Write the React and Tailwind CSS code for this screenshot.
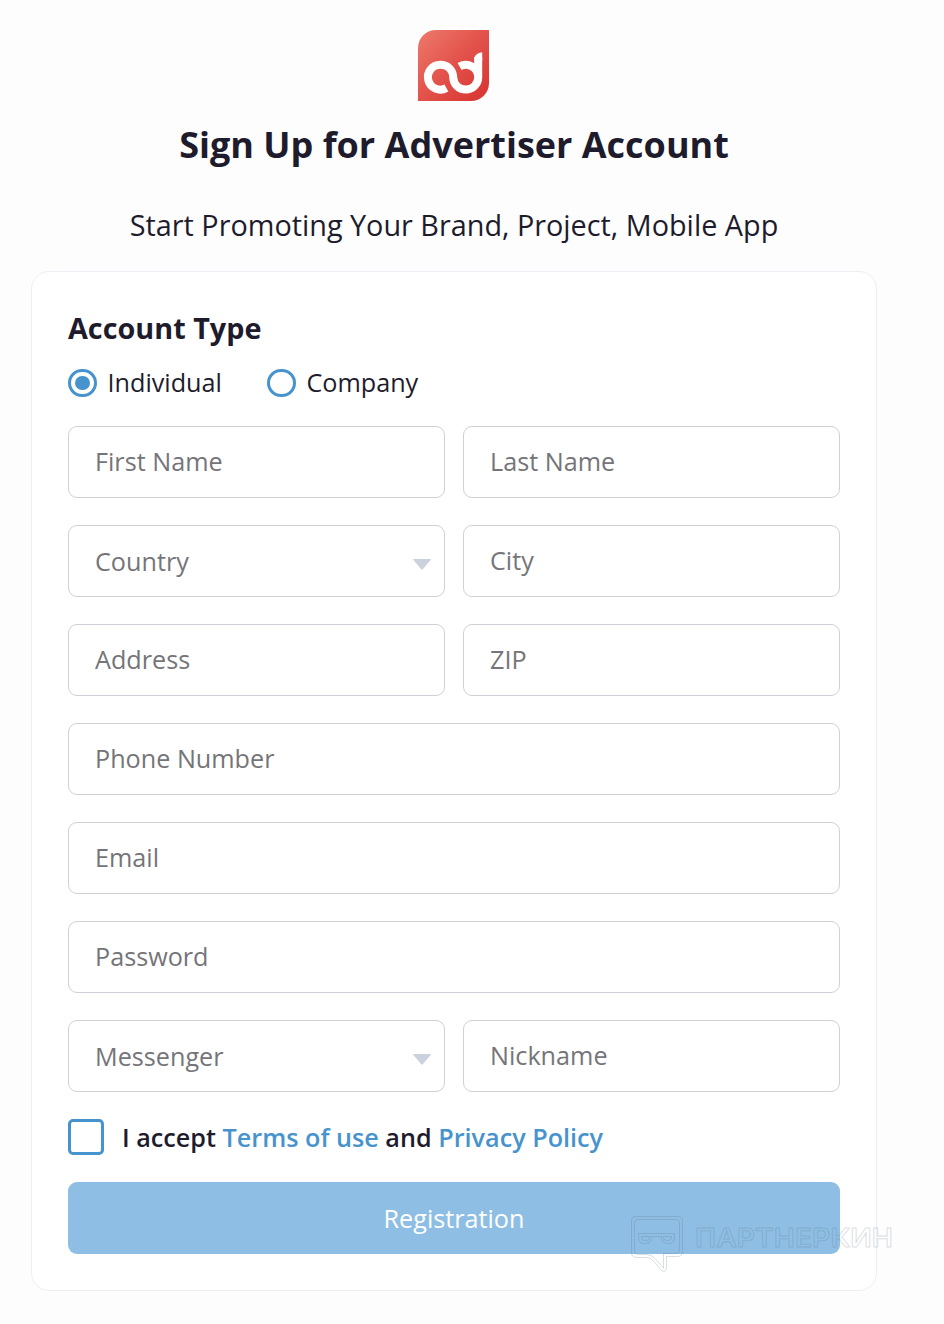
import React from 'react';

const Logo = () => (
  <svg width="71" height="71" viewBox="0 0 71 71" fill="none" className="mr-[2px]">
    <defs>
      <linearGradient id="logoBg" x1="0" y1="0" x2="71" y2="71" gradientUnits="userSpaceOnUse">
        <stop offset="0" stopColor="#ee7a6c" />
        <stop offset="0.5" stopColor="#e2524b" />
        <stop offset="1" stopColor="#d8322f" />
      </linearGradient>
    </defs>
    <path d="M18 0H70.5Q71 0 71 0.5V53A18 18 0 0 1 53 71H0.5Q0 71 0 70.5V18A18 18 0 0 1 18 0Z" fill="url(#logoBg)" />
    <g stroke="#fff" strokeWidth="8">
      <path d="M28.4 58A12.4 12.4 0 1 1 22.4 34.800C29.800 34.800 34.800 40 35.200 47.200C35.600 54.400 40.800 59.600 47.800 59.600A12.400 12.400 0 0 0 60.200 47.200V27" />
      <path d="M41.6 36.500A12.400 12.400 0 0 1 60.200 47.200" />
    </g>
    <path d="M56.2 29Q56.700 23.200 64.200 22.300V31H56.200Z" fill="#fff" />
  </svg>
);

const Radio = ({ label, checked }) => (
  <label className="flex items-center gap-[10.5px]">
    <span className="mt-px flex h-[28px] w-[29px] items-center justify-center rounded-full border-[3px] border-[#4793cd]">
      {checked && <span className="h-[14px] w-[15px] rounded-full bg-[#4793cd]" />}
    </span>
    <span className="text-[25.2px] leading-[34px]">{label}</span>
  </label>
);

const Field = ({ label, select, wide }) => (
  <div
    className={`flex h-[72px] items-center justify-between rounded-[9px] border border-[#cfd1d9] bg-white pl-[26px] pr-[13px] text-[25.2px] text-[#757579] ${wide ? 'col-span-2' : ''}`}
  >
    <span className={select ? 'pt-[2px]' : ''}>{label}</span>
    {select && (
      <svg width="18" height="11" viewBox="0 0 18 11" className="mt-[7px]">
        <path d="M0.8 0H17.2Q18.4 0 17.6 1L9.8 10.3Q9 11.2 8.2 10.3L0.4 1Q-0.4 0 0.8 0Z" fill="#cbd2de" />
      </svg>
    )}
  </div>
);

const Watermark = () => (
  <svg
    className="absolute left-[630px] top-[1214px]"
    width="266"
    height="60"
    viewBox="0 0 266 60"
    fill="none"
    stroke="#5a6b7c"
    strokeOpacity="0.22"
  >
    <path d="M6 2.5H47.5Q52.5 2.5 52.5 7.5V37Q52.5 42.5 47.5 42.5H36.5V54.5Q35.5 59 31.5 56.5L24 47.5Q20.5 43 16 43.5H6.5Q1.5 43.5 1.5 38V7.5Q1.5 2.5 6 2.5Z" />
    <path d="M8 5.5H46Q49.5 5.5 49.5 9V36Q49.5 39.5 46 39.5H33.5V54L25 44.5Q21 40.5 17 40.5H8Q4.5 40.5 4.5 37V9Q4.5 5.5 8 5.5Z" />
    <path d="M8.5 19.5H44.5V23.5Q44.5 29.5 38.5 29.5H37.5Q31.5 29.5 31.5 22.5H21.5Q21.5 29.5 15.5 29.5H14.5Q8.5 29.5 8.5 23.5Z" />
    <path d="M11.5 22.5H19.5V23.5Q19.5 26.5 16 26.5H15Q11.5 26.5 11.5 23.5ZM33.5 22.5H41.5V23.5Q41.5 26.5 38 26.5H37Q33.5 26.5 33.5 23.5Z" />
    <text
      x="65"
      y="32.5"
      textLength="198"
      lengthAdjust="spacingAndGlyphs"
      fontFamily="Inter, sans-serif"
      fontWeight="600"
      fontSize="26"
    >
      ПАРТНЕРКИН
    </text>
  </svg>
);

const fields = [
  { label: 'First Name' },
  { label: 'Last Name' },
  { label: 'Country', select: true },
  { label: 'City' },
  { label: 'Address' },
  { label: 'ZIP' },
  { label: 'Phone Number', wide: true },
  { label: 'Email', wide: true },
  { label: 'Password', wide: true },
  { label: 'Messenger', select: true },
  { label: 'Nickname' },
];

const App = () => {
  return (
    <div className="relative h-[1324px] w-[944px] bg-[#fdfdfe] pl-[31px] pt-[30px] font-['Open_Sans',sans-serif] text-[#1e1c2c]">
      <div className="flex w-[846px] flex-col items-center">
        <Logo />
        <h1 className="mt-[19px] text-[36px] font-bold leading-[50px]">Sign Up for Advertiser Account</h1>
        <p className="mt-[35px] text-[28.8px] leading-[40px]">Start Promoting Your Brand, Project, Mobile App</p>

        <div className="mt-[26px] h-[1020px] w-full rounded-[18px] border border-[#eeeff5] bg-white px-[36px] pt-[36px]">
          <h2 className="text-[28.8px] font-bold leading-[40px]">Account Type</h2>
          <div className="mt-[17px] flex gap-[45px]">
            <Radio label="Individual" checked />
            <Radio label="Company" />
          </div>

          <div className="mt-[27px] grid grid-cols-2 gap-x-[18px] gap-y-[27px]">
            {fields.map((field) => (
              <Field key={field.label} {...field} />
            ))}
          </div>

          <div className="mt-[27px] flex items-center gap-[18px]">
            <span className="size-[36px] rounded-[5px] border-[3px] border-[#4793cd]" />
            <span className="text-[25.2px] font-semibold leading-[36px]">
              I accept <a className="text-[#4793cd]">Terms of use</a> and <a className="text-[#4793cd]">Privacy Policy</a>
            </span>
          </div>

          <button className="mt-[27px] h-[72px] w-full rounded-[9px] bg-[#8ebee4] pt-[2px] text-[25.2px] text-white">
            Registration
          </button>
        </div>
      </div>
      <Watermark />
    </div>
  );
};

export default App;
